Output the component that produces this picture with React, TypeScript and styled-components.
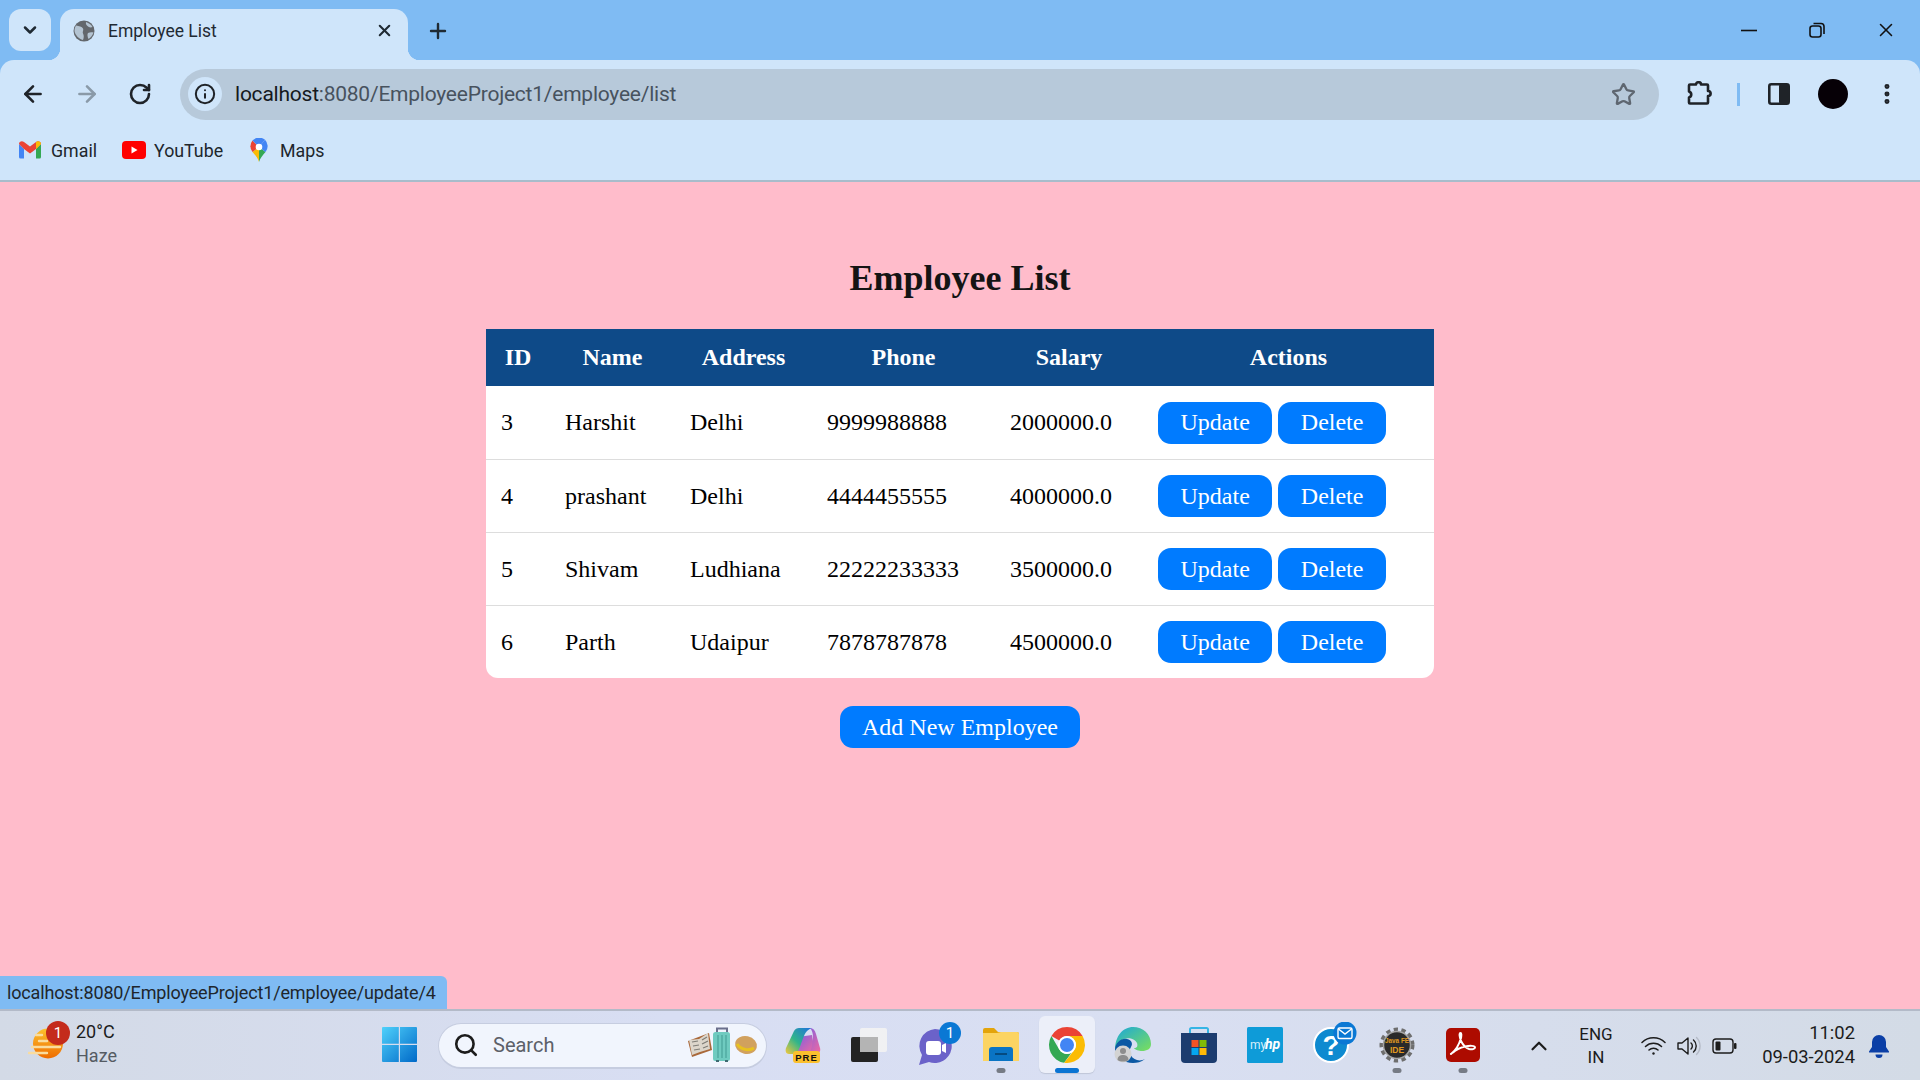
import styled, { createGlobalStyle } from 'styled-components';
import { ArrowLeft, ArrowRight, ChevronDown, ChevronUp, Info, MoreVertical, Plus, RotateCw, Search, Star, X } from 'lucide-react';

const UI_FONT = 'Roboto, "Noto Sans", sans-serif';

const employees = [
  { id: 3, name: 'Harshit', address: 'Delhi', phone: '9999988888', salary: '2000000.0' },
  { id: 4, name: 'prashant', address: 'Delhi', phone: '4444455555', salary: '4000000.0' },
  { id: 5, name: 'Shivam', address: 'Ludhiana', phone: '22222233333', salary: '3500000.0' },
  { id: 6, name: 'Parth', address: 'Udaipur', phone: '7878787878', salary: '4500000.0' },
];

const columns = [64, 125, 137, 183, 148, 291];

const GlobalStyle = createGlobalStyle`
  html, body { margin: 0; padding: 0; height: 100%; overflow: hidden; }
  * { box-sizing: border-box; }
`;

const Screen = styled.div`
  width: 1920px;
  height: 1080px;
  display: flex;
  flex-direction: column;
  font-family: ${UI_FONT};
`;

const BrowserTop = styled.header`
  background: #7fbbf3;
  flex: none;
`;

const TabStrip = styled.div`
  height: 60px;
  display: flex;
  align-items: flex-end;
  padding-left: 9px;
`;

const TabMenu = styled.div`
  width: 42px;
  height: 42px;
  margin-bottom: 9px;
  margin-right: 9px;
  border-radius: 12px;
  background: #cfe5fa;
  display: flex;
  align-items: center;
  justify-content: center;
  color: #1f2a33;
`;

const Tab = styled.div`
  position: relative;
  width: 348px;
  height: 51px;
  background: #cfe5fa;
  border-radius: 14px 14px 0 0;
  display: flex;
  align-items: center;
  padding: 0 14px 8px 13px;
  gap: 13px;
  color: #1f2a33;
  font-size: 17.5px;

  &::before, &::after {
    content: '';
    position: absolute;
    bottom: 0;
    width: 12px;
    height: 12px;
  }
  &::before {
    left: -12px;
    background: radial-gradient(circle at 0 0, transparent 12px, #cfe5fa 12.5px);
  }
  &::after {
    right: -12px;
    background: radial-gradient(circle at 100% 0, transparent 12px, #cfe5fa 12.5px);
  }
`;

const TabTitle = styled.span`
  flex: 1;
`;

const NewTab = styled.div`
  margin: 0 0 17px 18px;
  color: #1f2a33;
  display: flex;
`;

const WindowControls = styled.div`
  margin-left: auto;
  display: flex;
  align-self: flex-start;
  padding: 22px 26px 0 0;
  gap: 52px;
  color: #111;
`;

const Toolbar = styled.div`
  height: 60px;
  background: #cfe5fa;
  border-radius: 14px 14px 0 0;
  display: flex;
  align-items: center;
  padding: 8px 0 0 20px;
  color: #1f2328;
`;

const NavButton = styled.div<{ $dim?: boolean }>`
  width: 26px;
  margin-right: 28px;
  color: ${(p) => (p.$dim ? '#8a9aa8' : '#1f2328')};
  display: flex;
`;

const Omnibox = styled.div`
  width: 1479px;
  height: 51px;
  margin-left: -2px;
  border-radius: 26px;
  background: #b7c9da;
  display: flex;
  align-items: center;
  padding: 0 23px 0 8px;
`;

const InfoBubble = styled.div`
  width: 34px;
  height: 34px;
  border-radius: 50%;
  background: #cfe5fa;
  display: flex;
  align-items: center;
  justify-content: center;
  margin-right: 13px;
`;

const UrlText = styled.div`
  flex: 1;
  font-size: 21px;
  color: #47525e;
  letter-spacing: -0.23px;
  b { font-weight: 400; color: #15191e; }
`;

const ToolbarIcons = styled.div`
  display: flex;
  align-items: center;
  margin-left: 27px;
`;

const Divider = styled.div`
  width: 3px;
  height: 23px;
  background: #7fbbf3;
  margin: 0 28px 0 25px;
`;

const Avatar = styled.div`
  width: 30px;
  height: 30px;
  border-radius: 50%;
  background: #060006;
  margin: 0 26px 0 28px;
`;

const Bookmarks = styled.nav`
  height: 62px;
  background: #cfe5fa;
  border-bottom: 2px solid #a8bccb;
  display: flex;
  align-items: center;
  padding-left: 19px;
  font-size: 17.8px;
  color: #20262c;
`;

const Bookmark = styled.div<{ $gap: number; $after: number }>`
  display: flex;
  align-items: center;
  gap: ${(p) => p.$gap}px;
  margin-right: ${(p) => p.$after}px;
`;

const Main = styled.main`
  position: relative;
  flex: 1;
  background: #ffbccb;
  padding-top: 75px;
  display: flex;
  flex-direction: column;
  align-items: center;
  font-family: "Liberation Serif", "Times New Roman", serif;
`;

const Title = styled.h1`
  margin: 0 0 30px;
  font-size: 36px;
  line-height: 42px;
  font-weight: 700;
  color: #141414;
`;

const TableWrap = styled.div`
  width: 948px;
  border-radius: 0 0 12px 12px;
  overflow: hidden;
  background: #fff;
`;

const Table = styled.table`
  width: 100%;
  table-layout: fixed;
  border-collapse: collapse;
  font-size: 24px;
  color: #000;
`;

const Th = styled.th`
  height: 57px;
  padding: 0 15px;
  background: #0e4a88;
  color: #fff;
  font-weight: 700;
  text-align: center;
`;

const Td = styled.td`
  height: 73px;
  padding: 1px 15px 0;
  border-bottom: 1px solid #ddd;
  white-space: nowrap;
  tr:last-child & { border-bottom: 0; }
`;

const Actions = styled.div`
  display: flex;
  gap: 6px;
`;

const Button = styled.a`
  display: inline-flex;
  align-items: center;
  justify-content: center;
  height: 42px;
  padding: 0 22.5px;
  border-radius: 13px;
  background: #007bff;
  color: #fff;
  font-size: 24px;
`;

const AddButton = styled(Button)`
  margin-top: 28px;
  padding: 0 22px;
`;

const StatusBubble = styled.div`
  position: absolute;
  left: 0;
  bottom: 0;
  width: 447px;
  height: 33px;
  padding-left: 7px;
  display: flex;
  align-items: center;
  background: #7fbbf3;
  border-radius: 0 6px 0 0;
  font-family: ${UI_FONT};
  font-size: 18px;
  letter-spacing: -0.15px;
  color: #20262c;
  white-space: nowrap;
`;

const Taskbar = styled.footer`
  flex: none;
  height: 71px;
  border-top: 2px solid #b3bac8;
  background: linear-gradient(90deg, #d3dae6 0%, #d8def3 35%, #d9dff2 60%, #d3dbe6 100%);
  display: flex;
  align-items: center;
  color: #1c1c1c;
`;

const Weather = styled.div`
  position: relative;
  width: 366px;
  flex: none;
  display: flex;
  align-items: center;
  padding-left: 28px;
  gap: 12px;
  margin-top: -4px;
`;

const WeatherBadge = styled.span`
  position: absolute;
  left: 46px;
  top: 1px;
  width: 24px;
  height: 24px;
  border-radius: 50%;
  background: #c42b1c;
  color: #fff;
  font-size: 15px;
  display: flex;
  align-items: center;
  justify-content: center;
`;

const WeatherText = styled.div`
  font-size: 18px;
  line-height: 24px;
  span { display: block; color: #555b63; }
`;

const TaskCell = styled.div<{ $active?: boolean; $running?: boolean }>`
  position: relative;
  width: 66px;
  height: 57px;
  margin-top: -2px;
  flex: none;
  display: flex;
  align-items: center;
  justify-content: center;
  &::before {
    content: '';
    display: ${(p) => (p.$active ? 'block' : 'none')};
    position: absolute;
    inset: 0 5px;
    border-radius: 6px;
    background: #eceff9;
    box-shadow: 0 1px 1px #bfc6d8;
  }
  &::after {
    content: '';
    display: ${(p) => (p.$active || p.$running ? 'block' : 'none')};
    position: absolute;
    bottom: 0;
    left: 50%;
    transform: translateX(-50%);
    width: ${(p) => (p.$active ? '24px' : '9px')};
    height: 5px;
    border-radius: 3px;
    background: ${(p) => (p.$active ? '#0a74d3' : '#767b85')};
  }
  svg { position: relative; }
`;

const SearchBox = styled.div`
  width: 329px;
  height: 46px;
  margin: 0 3px 0 6px;
  flex: none;
  border-radius: 23px;
  background: #f1f5fd;
  border: 1px solid #c6cde0;
  border-bottom-width: 2px;
  display: flex;
  align-items: center;
  padding: 0 7px 0 14px;
  gap: 14px;
  font-size: 20px;
  color: #5c6068;
  span { flex: 1; }
`;

const Tray = styled.div`
  flex: 1;
  display: flex;
  align-items: center;
  padding-left: 30px;
`;

const LangText = styled.div`
  width: 60px;
  margin: 0 15px 0 14px;
  text-align: center;
  font-size: 17px;
  line-height: 23px;
`;

const TrayIcons = styled.div`
  display: flex;
  align-items: center;
  gap: 11px;
`;

const Clock = styled.div`
  margin-left: 6px;
  width: 112px;
  margin-top: -2px;
  text-align: right;
  font-size: 18.4px;
  line-height: 24px;
`;

const Bell = styled.div`
  margin-left: 14px;
  display: flex;
`;

function GlobeIcon() {
  return (
    <svg width="22" height="22" viewBox="0 0 22 22">
      <circle cx="11" cy="11" r="10.5" fill="#63676c" />
      <path d="M3 5.500c3 .5 6 1 7 3s-1 3 0 5 1 4 0 6.500C6 19 2 15 1.500 11c0-2 .5-4 1.500-5.500zM13 2c2 1 5 2 6.500 5-2 1-4 0-5-1s-2-2-1.500-4zM15 13c2-1 3.500-1 5.500-.5-1 3-2.500 5-5 6.500-1-2-1.500-4.500-.5-6z" fill="#b4c4d2" />
    </svg>
  );
}

function GmailIcon() {
  return (
    <svg width="22" height="18" viewBox="0 0 22 18">
      <path d="M0 3v13a1.500 1.500 0 0 0 1.500 1.500H5V8z" fill="#4285f4" />
      <path d="M22 3v13a1.500 1.500 0 0 1-1.500 1.500H17V8z" fill="#34a853" />
      <path d="M0 3c0-2.500 3-3.500 5-2l6 4.500L17 1c2-1.500 5-.5 5 2l-5 5-6 4.500L5 8z" fill="#ea4335" />
      <path d="M17 1c2-1.500 5-.5 5 2l-5 5z" fill="#fbbc04" />
    </svg>
  );
}

function YoutubeIcon() {
  return (
    <svg width="24" height="18" viewBox="0 0 24 18">
      <rect width="24" height="18" rx="4" fill="#f00" />
      <path d="M9.500 5.500v7l6-3.500z" fill="#fff" />
    </svg>
  );
}

function MapsIcon() {
  return (
    <svg width="18" height="24" viewBox="0 0 18 24">
      <path d="M9 24C8 20 5 17 2.500 14L9 9z" fill="#fbbc04" />
      <path d="M9 24c1-4 4-7 6.500-10L9 9z" fill="#34a853" />
      <path d="M2.500 2.500A9 9 0 0 0 2.500 14L9 9z" fill="#ea4335" />
      <path d="M2.500 2.500A9 9 0 0 1 15 1.800L9 9z" fill="#4285f4" />
      <path d="M15 1.800A9 9 0 0 1 15.500 14L9 9z" fill="#4285f4" />
      <circle cx="9" cy="9" r="3.300" fill="#fff" />
    </svg>
  );
}

function PuzzleIcon() {
  return (
    <svg width="26" height="26" viewBox="0 0 26 26" fill="none" stroke="#1f2328" strokeWidth="2.600" strokeLinejoin="round">
      <path d="M4 3.500h6c0-3 5-3 5 0h6a1 1 0 0 1 1 1v5.500c3.500 0 3.500 5 0 5v6.500a1 1 0 0 1-1 1H4a1 1 0 0 1-1-1v-5c3-1 3-5 0-6V4.500a1 1 0 0 1 1-1z" />
    </svg>
  );
}

function SidePanelIcon() {
  return (
    <svg width="22" height="22" viewBox="0 0 22 22">
      <rect x="1.300" y="1.300" width="19.400" height="19.400" rx="2" fill="none" stroke="#1f2328" strokeWidth="2.600" />
      <rect x="11" y="1" width="10" height="20" rx="2" fill="#1f2328" />
    </svg>
  );
}

function RestoreIcon() {
  return (
    <svg width="16" height="16" viewBox="0 0 16 16" fill="none" stroke="#111" strokeWidth="1.600">
      <rect x="1" y="4" width="11" height="11" rx="2.500" />
      <path d="M4.500 1.500H12a3 3 0 0 1 3 3V12" />
    </svg>
  );
}

function MinimizeIcon() {
  return (
    <svg width="16" height="16" viewBox="0 0 16 16">
      <path d="M0 8.500h16" stroke="#111" strokeWidth="1.600" />
    </svg>
  );
}

function SunIcon() {
  return (
    <svg width="36" height="31" viewBox="0 0 36 31">
      <defs>
        <linearGradient id="sun" x1="0" y1="0" x2="0" y2="1">
          <stop offset="0" stopColor="#fcc22d" />
          <stop offset="1" stopColor="#ef6c00" />
        </linearGradient>
      </defs>
      <circle cx="20" cy="15.500" r="15" fill="url(#sun)" />
      <g stroke="#f9dc9f" strokeWidth="2.400" strokeLinecap="round">
        <path d="M8 7h6M11 13h8M4 19h28M1 25h18" />
      </g>
    </svg>
  );
}

function WindowsIcon() {
  return (
    <svg width="35" height="35" viewBox="0 0 35 35">
      <defs>
        <linearGradient id="win" x1="0" y1="0" x2="1" y2="1">
          <stop offset="0" stopColor="#4fd1fb" />
          <stop offset="1" stopColor="#0069c8" />
        </linearGradient>
      </defs>
      <path d="M1 0h15.800v16.800H0V1a1 1 0 0 1 1-1zM18 0h16a1 1 0 0 1 1 1v15.800H18zM0 18h16.800v17H1a1 1 0 0 1-1-1zM18 18h17v16a1 1 0 0 1-1 1H18z" fill="url(#win)" />
    </svg>
  );
}

function SearchEmoji() {
  return (
    <svg width="72" height="36" viewBox="0 0 72 36">
      <path d="M1 14 22 6l3 17-20 7z" fill="#a9683a" />
      <path d="M2 13l10-1 9-6 2 16-10 3-8 3z" fill="#dcd6cb" />
      <path d="M5 15l6-1M6 19l6-1M7 23l6-1M15 13l5-3M15 17l6-3M16 21l5-2" stroke="#7f7d77" strokeWidth="1.200" />
      <path d="M30 5V1.500h10V5" fill="none" stroke="#6a6f8c" strokeWidth="2" />
      <rect x="26" y="5" width="17" height="29" rx="2.500" fill="#6fcbc0" />
      <path d="M31 8v23M35 8v23M39 8v23" stroke="#4aa49b" strokeWidth="1.200" />
      <path d="M29 34h3M38 34h3" stroke="#3f6a70" strokeWidth="2" />
      <ellipse cx="59" cy="18" rx="11" ry="9" fill="#d1a15e" transform="rotate(12 59 18)" />
      <path d="M50 17c4 6 12 7 17 4" fill="none" stroke="#e8c21f" strokeWidth="3" />
    </svg>
  );
}

function CopilotIcon() {
  return (
    <svg width="36" height="36" viewBox="0 0 36 36">
      <defs>
        <linearGradient id="cpA" x1="0" y1="1" x2="1" y2="0">
          <stop offset="0" stopColor="#f5c83a" />
          <stop offset="0.45" stopColor="#30b58a" />
          <stop offset="1" stopColor="#1f6fe0" />
        </linearGradient>
        <linearGradient id="cpB" x1="0" y1="0" x2="1" y2="1">
          <stop offset="0" stopColor="#7f5fe0" />
          <stop offset="1" stopColor="#f26aa0" />
        </linearGradient>
      </defs>
      <path d="M13 10 27 8l3 18H12z" fill="url(#cpB)" />
      <path d="M9 4c1-2 3-3 5-3h13c-3 1-6 3-8 8-3 7-4 12-6 15-1 2-3 3-6 3H4c-3 0-4-3-3-6z" fill="url(#cpA)" />
      <path d="M25 1c3 0 5 2 6 6l4 14c1 3-1 6-4 6H21c4-1 5-4 6-8l1-8c0-5-1-8-3-10z" fill="url(#cpB)" />
      <rect x="8" y="24" width="27" height="12" rx="3" fill="#fbc02d" />
      <text x="21.500" y="33.500" textAnchor="middle" fontSize="9.500" fontWeight="700" fontFamily="Liberation Sans, sans-serif" fill="#111" letterSpacing="1">PRE</text>
    </svg>
  );
}

function TaskViewIcon() {
  return (
    <svg width="36" height="34" viewBox="0 0 36 34">
      <rect x="0" y="9" width="27" height="25" rx="2" fill="#232323" />
      <rect x="9" y="0" width="27" height="24" rx="2" fill="#f3f3f3" fillOpacity="0.9" />
      <rect x="9" y="9" width="18" height="15" fill="#b4b4b4" />
    </svg>
  );
}

function MeetIcon() {
  return (
    <svg width="52" height="46" viewBox="0 0 52 46">
      <path d="M26 7a17 17 0 1 1-6 33l-10 3 3-10A17 17 0 0 1 26 7z" fill="#6b62c9" />
      <rect x="17" y="19" width="15" height="14" rx="3" fill="#fff" />
      <path d="M33 23l4-2v10l-4-2z" fill="#fff" />
      <circle cx="41" cy="11" r="11" fill="#0a78d4" />
      <text x="41" y="16" textAnchor="middle" fontSize="15" fontFamily="Roboto, sans-serif" fill="#fff">1</text>
    </svg>
  );
}

function FolderIcon() {
  return (
    <svg width="36" height="33" viewBox="0 0 36 33">
      <path d="M0 2a2 2 0 0 1 2-2h9l4 4h19a2 2 0 0 1 2 2v6H0z" fill="#e3a40b" />
      <path d="M0 5h14l4-1h16a2 2 0 0 1 2 2v27H0z" fill="#fcd462" />
      <path d="M6 22a3 3 0 0 1 3-3h18a3 3 0 0 1 3 3v11H6z" fill="#0a74c4" />
      <path d="M12 26h12" stroke="#04416f" strokeWidth="1.600" />
    </svg>
  );
}

function ChromeIcon() {
  return (
    <svg width="36" height="36" viewBox="2 2 44 44">
      <path d="M24 2A22 22 0 0 1 43.050 13H24a11 11 0 0 0-9.500 5.500L4.950 13A22 22 0 0 1 24 2z" fill="#ea4335" />
      <path d="M4.950 13l9.550 16.500a11 11 0 0 0 15 4L20.500 45.700A22 22 0 0 1 4.950 13z" fill="#34a853" />
      <path d="M43.050 13H24a11 11 0 0 1 9.500 16.500L20.500 45.700A22 22 0 0 0 43.050 13z" fill="#fbbc04" />
      <circle cx="24" cy="24" r="11" fill="#fff" />
      <circle cx="24" cy="24" r="8.600" fill="#4285f4" />
    </svg>
  );
}

function EdgeIcon() {
  return (
    <svg width="38" height="36" viewBox="0 0 38 36">
      <defs>
        <linearGradient id="edA" x1="0" y1="0" x2="1" y2="1">
          <stop offset="0" stopColor="#1aa6dc" />
          <stop offset="1" stopColor="#7ce05a" />
        </linearGradient>
      </defs>
      <path d="M19 0c10 0 18 7 18 17 0 5-4 7-9 7-3 0-7-1-8-3 3 0 4-2 3-5-2-4-8-6-13-4-5 2-8 6-9 11C1 9 9 0 19 0z" fill="url(#edA)" />
      <path d="M1 23c0-7 6-12 12-11 5 1 6 5 4 8-3 4-1 11 6 13 3 1 6 0 8-1-4 3-8 4-12 4C10 36 2 31 1 23z" fill="#0c59a4" />
      <circle cx="9" cy="27" r="8.500" fill="#d3d3d3" />
      <circle cx="9" cy="24" r="3" fill="#8d8d8d" />
      <path d="M3.500 33c0-4 3-5 5.500-5s5.500 1 5.500 5c-3 2-8 2-11 0z" fill="#8d8d8d" />
    </svg>
  );
}

function StoreIcon() {
  return (
    <svg width="36" height="36" viewBox="0 0 36 36">
      <path d="M9 6V2.500A1.500 1.500 0 0 1 10.500 1h15A1.500 1.500 0 0 1 27 2.500V6" fill="none" stroke="#35b5e5" strokeWidth="2" />
      <path d="M0 6h36v26a4 4 0 0 1-4 4H4a4 4 0 0 1-4-4z" fill="#1c3c6f" />
      <rect x="10.500" y="13" width="7" height="7" fill="#f35325" />
      <rect x="18.500" y="13" width="7" height="7" fill="#81bc06" />
      <rect x="10.500" y="21" width="7" height="7" fill="#05a6f0" />
      <rect x="18.500" y="21" width="7" height="7" fill="#ffba08" />
    </svg>
  );
}

function MyHpIcon() {
  return (
    <svg width="36" height="36" viewBox="0 0 36 36">
      <rect width="36" height="36" rx="1.500" fill="#0e9bd8" />
      <text x="3" y="22" fontSize="12" fontFamily="Roboto, sans-serif" fill="#d7f0fb">my</text>
      <text x="18" y="22" fontSize="14" fontWeight="700" fontStyle="italic" fontFamily="Roboto, sans-serif" fill="#fff">hp</text>
    </svg>
  );
}

function HelpIcon() {
  return (
    <svg width="52" height="46" viewBox="0 0 52 46">
      <circle cx="26" cy="23" r="17" fill="#0e8ad0" stroke="#fff" strokeWidth="2" />
      <text x="26" y="33" textAnchor="middle" fontSize="28" fontWeight="700" fontFamily="Liberation Sans, sans-serif" fill="#fff">?</text>
      <circle cx="40" cy="11" r="11.500" fill="#0a78d4" />
      <rect x="33" y="6" width="14" height="10.500" rx="1.500" fill="none" stroke="#fff" strokeWidth="1.400" />
      <path d="M33.500 7l6.500 5 6.500-5" fill="none" stroke="#fff" strokeWidth="1.400" />
    </svg>
  );
}

function JavaIdeIcon() {
  return (
    <svg width="36" height="36" viewBox="0 0 36 36">
      <circle cx="18" cy="18" r="14.500" fill="none" stroke="#6e6e6e" strokeWidth="6" strokeDasharray="4 3.200" />
      <circle cx="18" cy="18" r="13.500" fill="#2a2a2a" stroke="#a5a5a5" strokeWidth="1.500" />
      <text x="18" y="16" textAnchor="middle" fontSize="8" fontWeight="700" fontFamily="Liberation Sans, sans-serif" fill="#e09a20" textLength="24" lengthAdjust="spacingAndGlyphs">Java FE</text>
      <text x="18" y="25.500" textAnchor="middle" fontSize="8.500" fontWeight="700" fontFamily="Liberation Sans, sans-serif" fill="#e09a20">IDE</text>
    </svg>
  );
}

function AcrobatIcon() {
  return (
    <svg width="34" height="34" viewBox="0 0 34 34">
      <rect width="34" height="34" rx="5" fill="#ad0b00" />
      <path d="M5 26c4-3 8-9 10-16 .5-3 .5-5-.5-5-1.500 0-1 4 .5 8 2 4 5 7 8 8 3 .8 6 0 6-1.500 0-2-5-2-10-1-4 1-9 3-12 6-1.500 1-2.500 1.500-2 1.500z" fill="none" stroke="#fff" strokeWidth="2" strokeLinejoin="round" />
    </svg>
  );
}

function WifiIcon() {
  return (
    <svg width="25" height="20" viewBox="0 0 25 20" fill="none" stroke="#1c1c1c" strokeWidth="1.500" strokeLinecap="round">
      <path d="M1 6.500a16.500 16.500 0 0 1 23 0M4.500 10.500a11.500 11.500 0 0 1 16 0M8 14a6.500 6.500 0 0 1 9 0" />
      <circle cx="12.500" cy="17.500" r="1.200" fill="#1c1c1c" stroke="none" />
    </svg>
  );
}

function VolumeIcon() {
  return (
    <svg width="24" height="20" viewBox="0 0 24 20" fill="none" stroke="#1c1c1c" strokeWidth="1.400">
      <path d="M1 7v6h4l6 5V2L5 7z" strokeLinejoin="round" />
      <path d="M14 7a4 4 0 0 1 0 6M16.500 4a8 8 0 0 1 0 12" strokeLinecap="round" />
      <path d="M19.500 1.500a12 12 0 0 1 0 17" stroke="#b4bac6" strokeLinecap="round" />
    </svg>
  );
}

function BatteryIcon() {
  return (
    <svg width="25" height="16" viewBox="0 0 25 16">
      <rect x="1" y="1" width="20" height="14" rx="3" fill="none" stroke="#1c1c1c" strokeWidth="1.400" />
      <rect x="3.500" y="3.500" width="5" height="9" rx="1" fill="#1c1c1c" />
      <rect x="22" y="5" width="2.500" height="6" rx="1" fill="#1c1c1c" />
    </svg>
  );
}

function BellIcon() {
  return (
    <svg width="20" height="24" viewBox="0 0 20 24">
      <path d="M10 1a7 7 0 0 1 7 7v5l3 4.500a.6.6 0 0 1-.5 1H.5a.6.6 0 0 1-.5-1L3 13V8a7 7 0 0 1 7-7z" fill="#0b3fa6" />
      <path d="M6.500 20.500h7a3.500 3.500 0 0 1-7 0z" fill="#0b3fa6" />
    </svg>
  );
}

export default function App() {
  return (
    <Screen>
      <GlobalStyle />
      <BrowserTop>
        <TabStrip>
          <TabMenu>
            <ChevronDown size={20} strokeWidth={3} />
          </TabMenu>
          <Tab>
            <GlobeIcon />
            <TabTitle>Employee List</TabTitle>
            <X size={19} strokeWidth={2.6} />
          </Tab>
          <NewTab>
            <Plus size={24} strokeWidth={2.4} />
          </NewTab>
          <WindowControls>
            <MinimizeIcon />
            <RestoreIcon />
            <X size={22} strokeWidth={1.7} style={{ margin: '-3px -3px 0 -2px' }} />
          </WindowControls>
        </TabStrip>
        <Toolbar>
          <NavButton>
            <ArrowLeft size={26} strokeWidth={2.4} />
          </NavButton>
          <NavButton $dim>
            <ArrowRight size={26} strokeWidth={2.4} />
          </NavButton>
          <NavButton>
            <RotateCw size={24} strokeWidth={2.6} />
          </NavButton>
          <Omnibox>
            <InfoBubble>
              <Info size={22} strokeWidth={2.2} />
            </InfoBubble>
            <UrlText>
              <b>localhost</b>:8080/EmployeeProject1/employee/list
            </UrlText>
            <Star size={25} strokeWidth={2.2} color="#5e6670" />
          </Omnibox>
          <ToolbarIcons>
            <PuzzleIcon />
            <Divider />
            <SidePanelIcon />
            <Avatar />
            <MoreVertical size={26} strokeWidth={2.6} />
          </ToolbarIcons>
        </Toolbar>
        <Bookmarks>
          <Bookmark $gap={10} $after={25}>
            <GmailIcon />
            Gmail
          </Bookmark>
          <Bookmark $gap={8} $after={27}>
            <YoutubeIcon />
            YouTube
          </Bookmark>
          <Bookmark $gap={12} $after={0}>
            <MapsIcon />
            Maps
          </Bookmark>
        </Bookmarks>
      </BrowserTop>

      <Main>
        <Title>Employee List</Title>
        <TableWrap>
          <Table>
            <colgroup>
              {columns.map((w) => (
                <col key={w} width={w} />
              ))}
            </colgroup>
            <thead>
              <tr>
                <Th>ID</Th>
                <Th>Name</Th>
                <Th>Address</Th>
                <Th>Phone</Th>
                <Th>Salary</Th>
                <Th>Actions</Th>
              </tr>
            </thead>
            <tbody>
              {employees.map((e) => (
                <tr key={e.id}>
                  <Td>{e.id}</Td>
                  <Td>{e.name}</Td>
                  <Td>{e.address}</Td>
                  <Td>{e.phone}</Td>
                  <Td>{e.salary}</Td>
                  <Td>
                    <Actions>
                      <Button>Update</Button>
                      <Button>Delete</Button>
                    </Actions>
                  </Td>
                </tr>
              ))}
            </tbody>
          </Table>
        </TableWrap>
        <AddButton>Add New Employee</AddButton>
        <StatusBubble>localhost:8080/EmployeeProject1/employee/update/4</StatusBubble>
      </Main>

      <Taskbar>
        <Weather>
          <SunIcon />
          <WeatherBadge>1</WeatherBadge>
          <WeatherText>
            20°C
            <span>Haze</span>
          </WeatherText>
        </Weather>
        <TaskCell>
          <WindowsIcon />
        </TaskCell>
        <SearchBox>
          <Search size={26} strokeWidth={2.4} color="#1c1c1c" />
          <span>Search</span>
          <SearchEmoji />
        </SearchBox>
        <TaskCell>
          <CopilotIcon />
        </TaskCell>
        <TaskCell>
          <TaskViewIcon />
        </TaskCell>
        <TaskCell>
          <MeetIcon />
        </TaskCell>
        <TaskCell $running>
          <FolderIcon />
        </TaskCell>
        <TaskCell $active>
          <ChromeIcon />
        </TaskCell>
        <TaskCell>
          <EdgeIcon />
        </TaskCell>
        <TaskCell>
          <StoreIcon />
        </TaskCell>
        <TaskCell>
          <MyHpIcon />
        </TaskCell>
        <TaskCell>
          <HelpIcon />
        </TaskCell>
        <TaskCell $running>
          <JavaIdeIcon />
        </TaskCell>
        <TaskCell $running>
          <AcrobatIcon />
        </TaskCell>
        <Tray>
          <ChevronUp size={26} strokeWidth={2} />
          <LangText>
            ENG
            <br />
            IN
          </LangText>
          <TrayIcons>
            <WifiIcon />
            <VolumeIcon />
            <BatteryIcon />
          </TrayIcons>
          <Clock>
            11:02
            <br />
            09-03-2024
          </Clock>
          <Bell>
            <BellIcon />
          </Bell>
        </Tray>
      </Taskbar>
    </Screen>
  );
}
